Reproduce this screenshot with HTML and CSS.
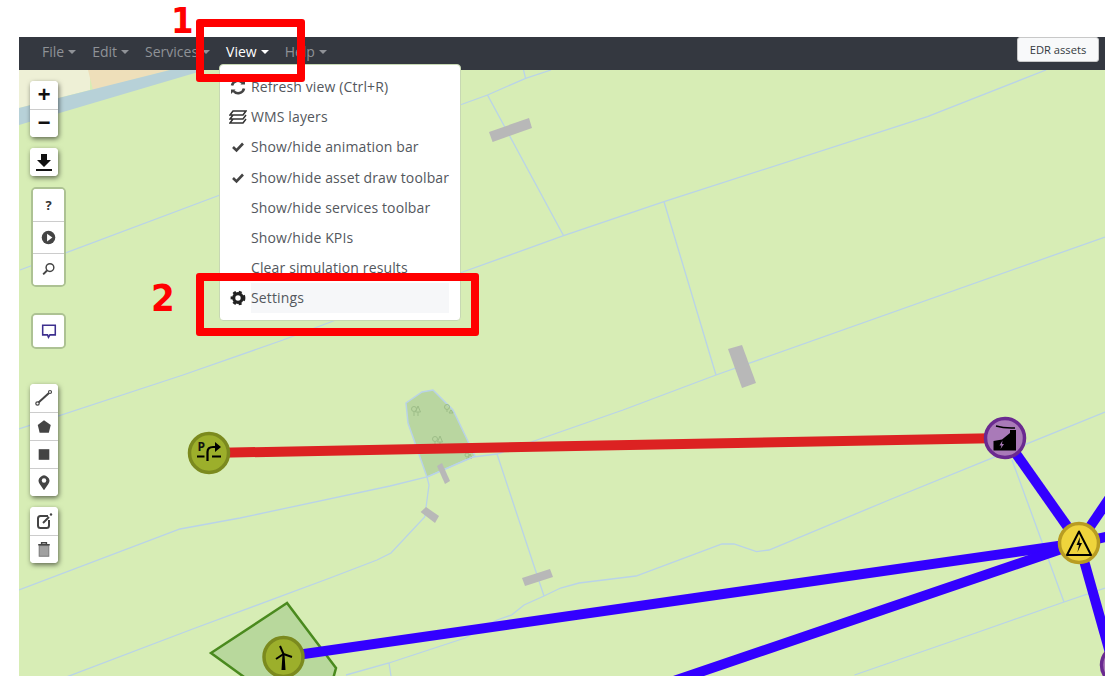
FILE: index.html
```html
<!DOCTYPE html>
<html lang="en">
<head>
<meta charset="utf-8">
<title>Map editor</title>
<link rel="stylesheet" href="styles.css">
</head>
<body>
<div class="app">
  <nav class="navbar">
    <ul class="nav-list">
      <li class="nav-item">File<span class="caret"></span></li>
      <li class="nav-item">Edit<span class="caret"></span></li>
      <li class="nav-item">Services<span class="caret"></span></li>
      <li class="nav-item nav-item-active">View<span class="caret"></span></li>
      <li class="nav-item">Help<span class="caret"></span></li>
    </ul>
    <button class="edr-button">EDR assets</button>
  </nav>
  <main class="map">
    <svg class="map-canvas" viewBox="19 70 1086 606" aria-hidden="true">
      <rect class="land" x="19" y="70" width="1086" height="606"/>
      <polygon class="area-pale" points="19,70 90,70 90,90 19,108"/>
      <polygon class="area-sand" points="88,70 170,70 93,90"/>
      <polygon class="river" points="19,108 170,70 205,70 19,125"/>

      <polygon class="park" points="406,403 422,392 433,390 453,410 475,456 427,477 408,423"/>
      <g class="tree">
        <circle cx="414" cy="409" r="2.5"/><path d="M414,412V416M418,406L415.500,412H420.500ZM418,412V416"/>
        <circle cx="447" cy="407" r="2.500"/><path d="M447,410V412M451,410L449,413H453Z"/>
        <circle cx="435" cy="439" r="2.500"/><path d="M435,442V445M440,436L437.500,442H442.500ZM440,442V445"/>
        <circle cx="467" cy="455" r="2"/><path d="M467,458V460M470,454L472,458H468Z"/>
      </g>

      <g class="ditches">
        <polyline points="460,105 487.500,95 525.600,78.300 551,70"/>
        <polyline points="523.500,70 525.600,78.300"/>
        <polyline points="487.500,95 563.600,235.700"/>
        <polyline points="20,270 220,195"/>
        <polyline points="19,429 183,375 283,340 460,273 563.600,235.700 664,201.700 927.400,116.700 1046,70"/>
        <polyline points="664,201.700 716,375"/>
        <polyline points="19,590 180,529 240,518 390,486 427,477 473,457 497,454 560,432 623,410 716,375 1105,237"/>
        <polyline points="497,454 544,596"/>
        <polyline points="427,477 429,485 427,500 424.700,517 391,553 377,560 330,578 190,630 19,695"/>
        <polyline points="346,675 389,663 465,638 497,620 511.600,615 524,605 544,596 560.600,588 579,583 636,576 722,544 734,544 756.500,551.700 769,550 889,500 1105,412"/>
        <polyline points="389,663 391,676"/>
        <polyline points="854.500,675 970,635 1064,602 1105,588"/>
        <polyline points="1012,460 1064,602"/>
      </g>

      <g class="culvert">
        <polygon points="489,132 529,118 532,128 492.600,142"/>
        <polygon points="728,349 742,345 756,383 742,388"/>
        <polygon points="437,466 442,463 450,481 445,484"/>
        <polygon points="420.600,512 426,507 439,516 435,523"/>
        <polygon points="522,578 550,569 553,577 525,586"/>
      </g>

      <polygon class="wind-area" points="287,603 211,653 262,690 330,690 336,668"/>

      <g class="cable-red"><line x1="209" y1="453" x2="1005" y2="438"/></g>
      <g class="cable-blue">
        <line x1="283" y1="657" x2="1079" y2="543"/>
        <line x1="665" y1="684" x2="1079" y2="543"/>
        <line x1="1005" y1="438" x2="1079" y2="543"/>
        <line x1="1079" y1="543" x2="1115" y2="490"/>
        <line x1="1079" y1="543" x2="1115" y2="535"/>
        <line x1="1079" y1="543" x2="1112" y2="660"/>
      </g>

      <circle class="node node-olive" cx="209" cy="453" r="19.500"/>
      <text class="node-letter" x="197.500" y="451">P</text>
      <path class="glyph-stroke" d="M197,456.500H204.500M212,456.500H221"/>
      <path class="glyph-stroke" d="M207.500,461V452Q207.500,447 213,447H216"/>
      <polygon class="glyph-fill" points="215,442 221,447 215,452"/>

      <circle class="node node-purple" cx="1005" cy="438" r="19.500"/>
      <polygon class="glyph-fill" points="993.500,450.500 993.500,441 1002,439.500 1010,433 1010,430 1016,430 1016,450.500"/>
      <path class="glyph-thin" d="M996,426Q1004,428.500 1015,428"/>
      <polygon class="glyph-purple" points="1002.500,440.500 999.500,445.500 1001.500,445.500 1000.500,449 1004,444 1002,444"/>

      <circle class="node node-yellow" cx="1079" cy="543" r="19.500"/>
      <polygon class="glyph-triangle" points="1079,531.500 1091,555 1067,555"/>
      <polygon class="glyph-fill" points="1080,537 1076.500,545 1079,545 1077.500,552 1082,543 1079.500,543"/>

      <circle class="node node-olive" cx="283.500" cy="657" r="19.500"/>
      <polygon class="glyph-fill" points="282.500,654 284.500,654 285.500,670 281.500,670"/>
      <path class="glyph-blade" d="M283.500,654L280,646M283.500,654L276,659M283.500,654L292,657"/>
      <circle class="node node-purple" cx="1121" cy="665" r="19.500"/>
    </svg>

    <div class="controls">
      <div class="bar bar-shadow">
        <button class="tool tool-zoom">+</button>
        <button class="tool tool-zoom">&#8722;</button>
      </div>
      <div class="bar bar-shadow gap-s">
        <button class="tool">
          <svg class="tool-icon" viewBox="0 0 28 28"><path class="ic-black" d="M11,6H17V12H21L14,19L7,12H11Z"/><rect class="ic-black" x="6" y="21" width="16" height="2"/></svg>
        </button>
      </div>
      <div class="bar bar-outline gap-s">
        <button class="tool tool-wide tool-help">?</button>
        <button class="tool tool-wide">
          <svg class="tool-icon" viewBox="0 0 32 32"><circle class="ic-dark" cx="16" cy="16" r="7"/><polygon class="ic-white" points="14.500,12 20,16 14.500,20"/></svg>
        </button>
        <button class="tool tool-wide">
          <svg class="tool-icon" viewBox="0 0 32 32"><circle class="ic-line" cx="17.500" cy="14" r="4"/><path class="ic-line-heavy" d="M14.500,17L10.500,21"/></svg>
        </button>
      </div>
      <div class="bar bar-outline gap-l">
        <button class="tool tool-wide">
          <svg class="tool-icon" viewBox="0 0 32 32"><path class="ic-comment" d="M10,10H23V20H17.500L16,22.500L15,20H10Z"/></svg>
        </button>
      </div>
      <div class="bar bar-shadow gap-xl">
        <button class="tool">
          <svg class="tool-icon" viewBox="0 0 28 28"><path class="ic-line-heavy" d="M8.500,18.500L19,9"/><circle class="ic-node" cx="7.500" cy="19.500" r="1.700"/><circle class="ic-node" cx="20" cy="8" r="1.500"/></svg>
        </button>
        <button class="tool">
          <svg class="tool-icon" viewBox="0 0 28 28"><polygon class="ic-dark" points="14,7.500 21,12.500 19,20.500 9.500,20.500 7.500,12.500"/></svg>
        </button>
        <button class="tool">
          <svg class="tool-icon" viewBox="0 0 28 28"><rect class="ic-dark" x="8.500" y="8.500" width="11" height="11"/></svg>
        </button>
        <button class="tool">
          <svg class="tool-icon" viewBox="0 0 28 28"><path class="ic-dark" d="M14,22L9.500,15.500A5.500,5.500 0 1 1 18.500,15.500Z"/><circle class="ic-white" cx="14" cy="12" r="2.300"/></svg>
        </button>
      </div>
      <div class="bar bar-shadow gap-s">
        <button class="tool">
          <svg class="tool-icon" viewBox="0 0 28 28"><path class="ic-line-heavy" d="M18,9H10.500Q8,9 8,11.500V18.500Q8,21 10.500,21H16.500Q19,21 19,18.500V13"/><path class="ic-line-heavy" d="M13,16L19,10"/><circle class="ic-dark" cx="21" cy="7.500" r="1.200"/></svg>
        </button>
        <button class="tool">
          <svg class="tool-icon" viewBox="0 0 28 28"><rect class="ic-grey" x="9" y="10" width="10" height="11"/><path class="ic-line" d="M8,9H20M11.500,8.500V7H16.500V8.500"/></svg>
        </button>
      </div>
    </div>
  </main>

  <div class="dropdown">
    <div class="menu-row">
      <span class="menu-icon"><svg class="menu-svg" viewBox="0 0 16 16"><path class="ic-sync" d="M2,6.500A6,6 0 0 1 12.500,4M14,9.500A6,6 0 0 1 3.500,12"/><polygon class="ic-dark" points="10.500,5.500 15,5.500 15,1"/><polygon class="ic-dark" points="5.500,10.500 1,10.500 1,15"/></svg></span>
      <span class="menu-label">Refresh view (Ctrl+R)</span>
    </div>
    <div class="menu-row">
      <span class="menu-icon"><svg class="menu-svg menu-svg-wide" viewBox="0 0 18 16"><path class="ic-layers" d="M4,2H17L14,6H1ZM17,6L14,10H1L4,6M17,10L14,14H1L4,10"/></svg></span>
      <span class="menu-label">WMS layers</span>
    </div>
    <div class="menu-row">
      <span class="menu-icon"><svg class="menu-svg" viewBox="0 0 16 16"><path class="ic-check" d="M3,8L6.500,11.500L13,4.500"/></svg></span>
      <span class="menu-label">Show/hide animation bar</span>
    </div>
    <div class="menu-row">
      <span class="menu-icon"><svg class="menu-svg" viewBox="0 0 16 16"><path class="ic-check" d="M3,8L6.500,11.500L13,4.500"/></svg></span>
      <span class="menu-label">Show/hide asset draw toolbar</span>
    </div>
    <div class="menu-row"><span class="menu-icon"></span><span class="menu-label">Show/hide services toolbar</span></div>
    <div class="menu-row"><span class="menu-icon"></span><span class="menu-label">Show/hide KPIs</span></div>
    <div class="menu-row"><span class="menu-icon"></span><span class="menu-label">Clear simulation results</span></div>
    <div class="menu-row">
      <span class="menu-icon"><svg class="menu-svg" viewBox="0 0 16 16"><circle class="ic-cog-ring" cx="8" cy="8" r="4.300"/><circle class="ic-cog-teeth" cx="8" cy="8" r="6.200"/></svg></span>
      <span class="menu-label menu-label-hover">Settings</span>
    </div>
  </div>
</div>

<div class="callout callout-view"></div>
<div class="callout callout-settings"></div>
<span class="callout-number number-one">1</span>
<span class="callout-number number-two">2</span>
</body>
</html>
```

FILE: styles.css
```css
* {
  box-sizing: border-box;
}

html,
body {
  height: 100%;
}

body {
  margin: 0;
  background: #fff;
  font-family: "Open Sans", "Noto Sans", sans-serif;
  overflow: hidden;
}

.app {
  position: relative;
  display: flex;
  flex-direction: column;
  height: 639px;
  margin: 37px 9px 0 19px;
  overflow: hidden;
}

/* Navbar */
.navbar {
  display: flex;
  flex: none;
  justify-content: space-between;
  height: 33px;
  padding: 0 6px 0 15px;
  background: #343840;
}

.nav-list {
  display: flex;
  margin: 0;
  padding: 0;
  list-style: none;
}

.nav-item {
  display: flex;
  align-items: center;
  height: 29px;
  padding: 0 8px;
  color: #8f9297;
  font-size: 14px;
}

.nav-item-active {
  color: #fff;
}

.caret {
  width: 0;
  height: 0;
  margin-left: 4px;
  border-top: 4px solid currentColor;
  border-right: 4px solid transparent;
  border-left: 4px solid transparent;
}

.edr-button {
  width: 82px;
  height: 25px;
  padding: 0;
  border: 1px solid #c8c8c8;
  border-radius: 3px;
  background: #f8f9fa;
  color: #343a40;
  font: 11.2px "Open Sans", sans-serif;
}

/* Map */
.map {
  position: relative;
  flex: 1;
  min-height: 0;
}

.map-canvas {
  display: block;
  width: 100%;
  height: 100%;
}

.land { fill: #d7edb5; }
.area-pale { fill: #eef0d6; }
.area-sand { fill: #eedfba; }
.river { fill: #b7d1d8; }
.park { fill: #b9d6a0; stroke: #b9d3e8; stroke-width: 1.500; }
.tree { fill: none; stroke: #9dbd88; stroke-width: 1; }
.ditches { fill: none; stroke: #b9d3e8; stroke-width: 1.300; }
.culvert { fill: #b8b8b8; }
.wind-area { fill: #b8d89c; stroke: #4a8a1e; stroke-width: 2.500; }
.cable-red { stroke: #dc2222; stroke-width: 10; }
.cable-blue { stroke: #3300ff; stroke-width: 10; }

.node { stroke-width: 3.500; }
.node-olive { fill: #9caf2b; stroke: #7b8a1e; }
.node-purple { fill: #a97ab8; stroke: #6a2a90; }
.node-yellow { fill: #efd43c; stroke: #b89c22; }
.node-letter { font: bold 12px "Open Sans", sans-serif; fill: #111; }
.glyph-fill { fill: #000; }
.glyph-purple { fill: #a97ab8; }
.glyph-stroke { fill: none; stroke: #000; stroke-width: 2.200; }
.glyph-thin { fill: none; stroke: #000; stroke-width: 1.500; }
.glyph-blade { fill: none; stroke: #000; stroke-width: 2; }
.glyph-triangle { fill: none; stroke: #000; stroke-width: 2; stroke-linejoin: round; }

/* Leaflet style controls */
.controls {
  position: absolute;
  top: 11px;
  left: 11px;
  display: flex;
  flex-direction: column;
  align-items: flex-start;
}

.bar {
  display: flex;
  flex-direction: column;
  overflow: hidden;
  background: #fff;
  border-radius: 4px;
}

.bar-shadow {
  box-shadow: 1px 2px 5px rgba(0, 0, 0, .55);
}

.bar-outline {
  margin-left: 1px;
  border: 2px solid #adc293;
  border-radius: 5px;
}

.gap-s { margin-top: 11px; }
.gap-l { margin-top: 26px; }
.gap-xl { margin-top: 35px; }

.tool {
  display: flex;
  align-items: center;
  justify-content: center;
  width: 28px;
  height: 28px;
  padding: 0;
  border: 0;
  border-top: 1px solid #ccc;
  background: #fff;
  color: #111;
}

.tool:first-child {
  border-top: 0;
}

.tool-wide {
  width: 31px;
  height: 32px;
}

.tool-zoom {
  padding-top: 2px;
  font: bold 22px "Liberation Mono", monospace;
}

.tool-help {
  font: bold 13px "Open Sans", sans-serif;
  color: #333;
}

.tool-icon {
  display: block;
  flex: none;
  width: 100%;
  height: 100%;
}

.ic-black { fill: #111; }
.ic-dark { fill: #444; }
.ic-white { fill: #fff; }
.ic-grey { fill: #a0a0a0; stroke: #777; stroke-width: 1; }
.ic-line { fill: none; stroke: #444; stroke-width: 1.500; }
.ic-line-heavy { fill: none; stroke: #444; stroke-width: 2; }
.ic-node { fill: #fff; stroke: #444; stroke-width: 1.200; }
.ic-comment { fill: #fff; stroke: #3d2f8e; stroke-width: 1.600; }

/* Dropdown */
.dropdown {
  position: absolute;
  top: 27px;
  left: 200px;
  width: 242px;
  height: 257px;
  padding: 7px 11px 0 0;
  background: #fff;
  border: 1px solid #c7d8b3;
  border-radius: 4px;
}

.menu-row {
  display: flex;
  align-items: center;
  height: 30.2px;
}

.menu-icon {
  display: flex;
  flex: none;
  align-items: center;
  justify-content: center;
  width: 31px;
  height: 30px;
  padding-left: 5px;
}

.menu-svg {
  display: block;
  width: 16px;
  height: 16px;
}

.menu-svg-wide {
  width: 18px;
}

.menu-label {
  flex: 1;
  color: #53575d;
  font-size: 14px;
  letter-spacing: .13px;
  line-height: 30px;
  white-space: nowrap;
}

.menu-label-hover {
  background: #f6f7f9;
}

.ic-sync { fill: none; stroke: #444; stroke-width: 2.600; }
.ic-layers { fill: none; stroke: #333; stroke-width: 1.500; }
.ic-check { fill: none; stroke: #444; stroke-width: 2.600; }
.ic-cog-ring { fill: none; stroke: #222; stroke-width: 3.200; }
.ic-cog-teeth { fill: none; stroke: #222; stroke-width: 2.400; stroke-dasharray: 2.900 2.960; }

/* Red annotations */
.callout {
  position: absolute;
  border: 8px solid #f00;
  border-radius: 3px;
}

.callout-view {
  top: 19px;
  left: 196px;
  width: 109px;
  height: 63px;
}

.callout-settings {
  top: 273px;
  left: 196px;
  width: 283px;
  height: 63px;
}

.callout-number {
  position: absolute;
  color: #f00;
  font-family: "DejaVu Sans", sans-serif;
  font-weight: bold;
  font-stretch: condensed;
  line-height: 1;
}

.number-one {
  top: 3px;
  left: 171px;
  font-size: 36px;
}

.number-two {
  top: 279px;
  left: 151px;
  font-size: 38px;
}
```
